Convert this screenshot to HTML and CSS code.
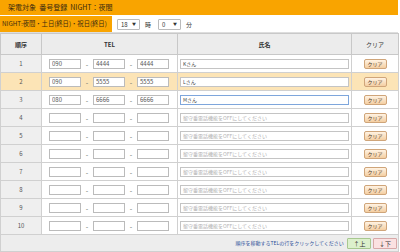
FILE: index.html
```html
<!DOCTYPE html>
<html lang="ja">
<head>
    <meta charset="UTF-8">
    <meta name="viewport" content="width=device-width, initial-scale=1.0">
    <title>架電対象 番号登録</title>
    <link rel="stylesheet" href="styles.css">
</head>
<body>
    <div class="panel">
        <div class="panel-title">架電対象&nbsp; 番号登録&nbsp; NIGHT：夜間</div>
        <div class="time-row">
            <div class="time-label">NIGHT:夜間・土日(終日)・祝日(終日)</div>
            <div class="time-fields">
                <span class="select-box">18 <span class="caret">▼</span></span>
                <span class="unit">時</span>
                <span class="select-box">0 <span class="caret">▼</span></span>
                <span class="unit">分</span>
            </div>
        </div>

        <table class="tel-table">
            <colgroup>
                <col class="col-no">
                <col class="col-tel">
                <col class="col-name">
                <col class="col-clear">
            </colgroup>
            <thead>
                <tr>
                    <th>順序</th>
                    <th>TEL</th>
                    <th>氏名</th>
                    <th class="th-light">クリア</th>
                </tr>
            </thead>
            <tbody id="rows"></tbody>
            <tfoot>
                <tr>
                    <td colspan="4" class="footer-cell">
                        <span class="hint">順序を移動するTELの行をクリックしてください</span>
                        <button class="move-btn up-btn">↑上</button>
                        <button class="move-btn down-btn">↓下</button>
                    </td>
                </tr>
            </tfoot>
        </table>
    </div>

    <script>
    document.addEventListener('DOMContentLoaded', function() {
        const rows = [
            { tel: ['090', '4444', '4444'], name: 'Kさん' },
            { tel: ['090', '5555', '5555'], name: 'Lさん', selected: true },
            { tel: ['080', '6666', '6666'], name: 'Mさん', focused: true }
        ];
        const body = document.getElementById('rows');

        for (let i = 0; i < 10; i++) {
            const item = rows[i] || { tel: ['', '', ''], name: '' };
            const tr = document.createElement('tr');
            if (item.selected) tr.classList.add('selected');
            const nameClass = item.focused ? 'name-input focused' : 'name-input';
            tr.innerHTML = `
                <td class="no-cell">${i + 1}</td>
                <td class="tel-cell">
                    <div class="tel-group">
                        <input class="tel-input" value="${item.tel[0]}">
                        <span class="dash">-</span>
                        <input class="tel-input" value="${item.tel[1]}">
                        <span class="dash">-</span>
                        <input class="tel-input" value="${item.tel[2]}">
                    </div>
                </td>
                <td class="name-cell">
                    <input class="${nameClass}" value="${item.name}" placeholder="留守番電話機能をOFFにしてください">
                </td>
                <td class="clear-cell"><button class="clear-btn">クリア</button></td>
            `;
            body.appendChild(tr);
        }
    });
    </script>
</body>
</html>
```

FILE: styles.css
```css
body {
    margin: 0;
    font-family: "Noto Sans CJK JP", "Liberation Sans", sans-serif;
    font-size: 7px;
    color: #333;
    background: #fff;
}

.panel {
    width: 398px;
}

.panel-title {
    height: 15px;
    line-height: 15px;
    padding-left: 8px;
    background-color: #f9a400;
    color: #3a2a10;
}

.time-row {
    display: flex;
    height: 16px;
    margin-top: 1px;
    border-bottom: 1px solid #ddd;
}

.time-label {
    width: 112px;
    padding-left: 2px;
    box-sizing: border-box;
    line-height: 16px;
    white-space: nowrap;
    overflow: hidden;
    font-size: 6.3px;
    background-color: #f9a400;
    color: #3a2a10;
}

.time-fields {
    display: flex;
    align-items: center;
    padding-left: 5px;
}

.select-box {
    display: inline-block;
    width: 15px;
    height: 9px;
    line-height: 9px;
    padding: 0 3px;
    border: 1px solid #bbb;
    border-radius: 1px;
    font-size: 6px;
}

.caret {
    font-size: 4px;
    float: right;
}

.unit {
    margin: 0 7px 0 5px;
    font-size: 6px;
}

.tel-table {
    width: 398px;
    border-collapse: collapse;
    table-layout: fixed;
}

.col-no { width: 41px; }
.col-tel { width: 136px; }
.col-name { width: 174px; }
.col-clear { width: 47px; }

.tel-table th {
    height: 18px;
    background-color: #ececec;
    border: 1px solid #c8c8c8;
    font-weight: bold;
    font-size: 6px;
    color: #333;
}

.tel-table th.th-light {
    font-weight: normal;
}

.tel-table td {
    height: 17px;
    padding: 0;
    border: 1px solid #d0d0d0;
}

.no-cell {
    text-align: center;
    background-color: #efefef;
    color: #555;
    font-size: 6px;
}

.tel-group {
    display: flex;
    align-items: center;
    padding-left: 7px;
}

.tel-input {
    box-sizing: border-box;
    width: 32px;
    height: 10px;
    padding: 0 2px;
    border: 1px solid #bbb;
    font-family: inherit;
    font-size: 6px;
    color: #555;
    background: #fff;
}

.dash {
    width: 12px;
    text-align: center;
    color: #666;
}

.name-cell {
    padding-left: 2px !important;
}

.name-input {
    box-sizing: border-box;
    display: block;
    width: 169px;
    height: 10px;
    padding: 0 2px;
    border: 1px solid #c4c4c4;
    font-family: inherit;
    font-size: 5px;
    color: #444;
    background: #fff;
}

.name-input::placeholder {
    color: #b0b0b0;
}

.name-input.focused {
    border-color: #7ea6dc;
}

.clear-cell {
    text-align: center;
}

.clear-btn {
    width: 23px;
    height: 10px;
    padding: 0;
    border: 1px solid #cfa57a;
    border-radius: 2px;
    background: linear-gradient(#fff3e3, #f4cfa2);
    font-family: inherit;
    font-size: 5px;
    color: #4a3520;
    line-height: 8px;
}

tr.selected td {
    background-color: #fce4b6;
}

.tel-table td.footer-cell {
    height: 16px;
    text-align: right;
    background-color: #ededed;
    padding-right: 1px;
}

.hint {
    color: #2c4d9a;
    font-size: 5px;
    margin-right: 2px;
}

.move-btn {
    width: 24px;
    height: 11px;
    padding: 0;
    border-radius: 1px;
    font-family: inherit;
    font-size: 6px;
    line-height: 9px;
    vertical-align: middle;
    color: #333;
}

.up-btn {
    background-color: #dcf0cc;
    border: 1px solid #a8c890;
}

.down-btn {
    background-color: #fbe1e1;
    border: 1px solid #d8a8a8;
}
```
